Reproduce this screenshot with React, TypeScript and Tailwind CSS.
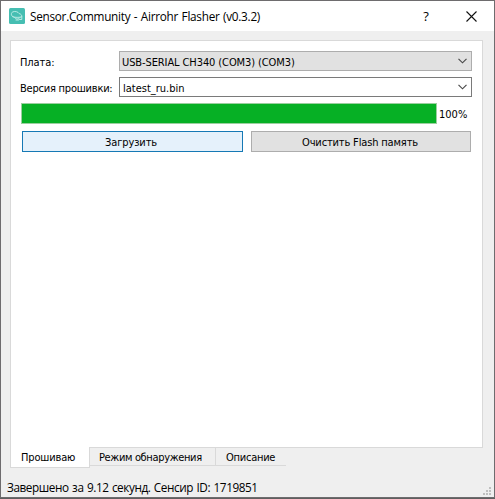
import React from "react";

function Chevron() {
  return (
    <svg width="9" height="6" viewBox="0 0 9 6" fill="none" stroke="#484848" strokeWidth="1.15" className="shrink-0">
      <path d="M0.5 0.8 L4.5 4.8 L8.5 0.8" />
    </svg>
  );
}

function AppIcon() {
  return (
    <svg width="16" height="16" viewBox="0 0 16 16" fill="none" className="shrink-0">
      <rect width="16" height="16" rx="1.5" fill="#46beb2" />
      <g stroke="#c4efe9" strokeWidth="0.9" strokeLinecap="round" strokeLinejoin="round">
        <path d="M4 8.8 C1.8 7.6 1.8 4.8 3.8 3.9 C6 2.9 9.2 3.8 10.2 5.6 C12 6 13 7.3 12.8 8.8 C9.8 9.6 6.5 9.6 4 8.8 Z" />
        <path d="M5.5 9.4 C7 11.6 9.5 11.5 11 9.6 M12.8 8.8 V11.5 H10.5 M7 12 H9.5" />
      </g>
    </svg>
  );
}

export default function App() {
  return (
    <div className="flex h-[499px] w-[495px] flex-col overflow-hidden bg-[#5f5f5f] pb-px font-['DejaVu_Sans_Condensed','DejaVu_Sans',sans-serif] text-[11px] leading-none whitespace-nowrap text-black [font-stretch:condensed]">
      <div className="flex h-[498px] flex-col border border-[#6e6c6e] bg-[#efefef]">
        <header className="flex h-[30px] shrink-0 items-center bg-white pl-2 font-['Open_Sans','Noto_Sans',sans-serif] [font-stretch:normal]">
          <AppIcon />
          <h1 className="ml-[5px] w-[385px] pt-px text-[11.75px] tracking-[-0.26px] [word-spacing:0.7px]">Sensor.Community - Airrohr Flasher (v0.3.2)</h1>
          <span className="ml-1.5 w-[10px] text-center text-[13px] font-medium">?</span>
          <svg width="11" height="11" viewBox="0 0 11 11" className="ml-[35px]" stroke="#111" strokeWidth="1.1">
            <path d="M0.5 0.5 L10.5 10.5 M10.5 0.5 L0.5 10.5" />
          </svg>
        </header>

        <main className="mt-[9px] ml-[9px] h-[408px] w-[473px] shrink-0 border border-[#d9d9d9] bg-white pt-[10px] pl-[9px]">
          <div className="flex h-5 items-center">
            <label className="w-[99px] pt-[3px] tracking-[-0.1px]">Плата:</label>
            <div className="flex h-5 w-[353px] items-center justify-between border border-[#adadad] bg-[#e1e1e1] pr-1 pl-0.5">
              <span className="pt-[2px] tracking-[-0.1px]">USB-SERIAL CH340 (COM3) (COM3)</span>
              <Chevron />
            </div>
          </div>
          <div className="mt-1.5 flex h-5 items-center">
            <label className="w-[99px] pt-[3px] tracking-[-0.22px]">Версия прошивки:</label>
            <div className="flex h-5 w-[353px] items-center justify-between border border-[#7a7a7a] bg-white pr-1 pl-[3px]">
              <span className="pt-[2px]">latest_ru.bin</span>
              <Chevron />
            </div>
          </div>
          <div className="mt-1.5 ml-px flex h-[21px] items-center">
            <div className="h-[21px] w-[416px] border border-[#9bcf9f] bg-[#06b025]" />
            <span className="ml-0.5 pt-[2px]">100%</span>
          </div>
          <div className="mt-[7px] ml-[2px] flex gap-2">
            <button className="h-[21px] w-[221px] border border-[#1679b5] bg-[#e5f1fb] pt-[2px] pr-[3px] tracking-[-0.1px]">Загрузить</button>
            <button className="h-[21px] w-[220px] border border-[#adadad] bg-[#e1e1e1] pt-[2px] pr-[2px] tracking-[-0.15px]">Очистить Flash память</button>
          </div>
        </main>

        <nav className="ml-[9px] flex h-5 shrink-0 items-start">
          <div className="relative -mt-px flex h-[21px] w-[80px] items-center border border-t-0 border-[#d9d9d9] bg-white pt-px pl-[10px] tracking-[-0.15px]">Прошиваю</div>
          <div className="flex h-[18px] w-[126px] items-center border-r border-b border-[#d9d9d9] pt-px pl-[9px] tracking-[-0.35px]">Режим обнаружения</div>
          <div className="flex h-[18px] w-[70px] items-center border-b border-[#d9d9d9] pt-px pl-[10px] tracking-[-0.25px]">Описание</div>
        </nav>

        <footer className="flex flex-1 items-end justify-between pr-[3px] pb-[2px] pl-[6px] font-['Open_Sans','Noto_Sans',sans-serif] [font-stretch:normal]">
          <span className="pb-px text-[11.75px] tracking-[-0.42px] [word-spacing:0.8px]">Завершено за 9.12 секунд. Сенсир ID: 1719851</span>
          <svg width="8" height="8" viewBox="0 0 8 8" fill="#bfbfbf">
            <path d="M6 0h2v2h-2z M3 3h2v2h-2z M6 3h2v2h-2z M0 6h2v2h-2z M3 6h2v2h-2z M6 6h2v2h-2z" />
          </svg>
        </footer>
      </div>
    </div>
  );
}
